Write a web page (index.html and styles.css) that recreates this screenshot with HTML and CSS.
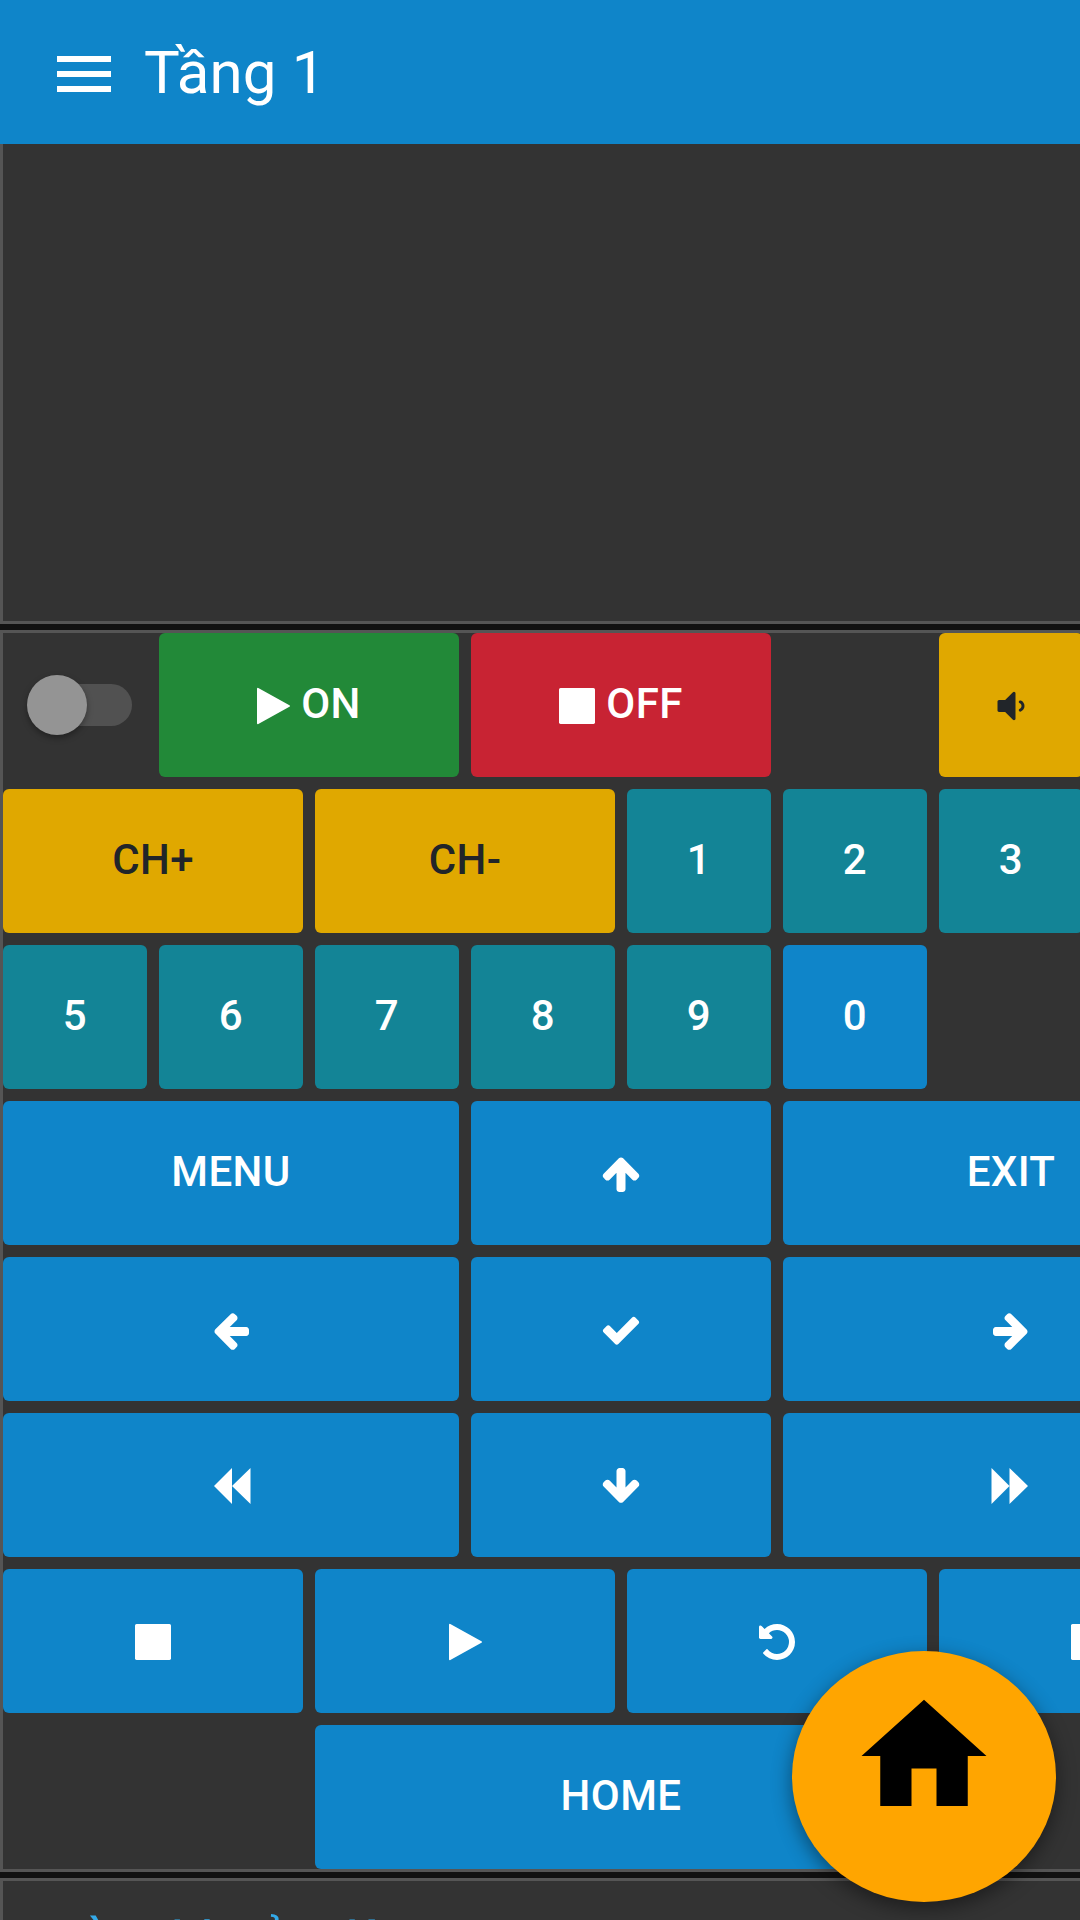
FILE: index.html
```
<!DOCTYPE html>
<html lang="vi">
<head>
<meta charset="utf-8">
<title>Tầng 1</title>
<link rel="stylesheet" href="styles.css">
</head>
<body>
<svg class="sprite" aria-hidden="true">
  <symbol id="play" viewBox="192 0 1408 1792"><path d="M1576 927l-1328 738q-23 13-39.500 3t-16.500-36v-1472q0-26 16.500-36t39.500 3l1328 738q23 13 23 31t-23 31z"/></symbol>
  <symbol id="stop" viewBox="128 0 1536 1792"><path d="M1664 192v1408q0 26-19 45t-45 19h-1408q-26 0-45-19t-19-45v-1408q0-26 19-45t45-19h1408q26 0 45 19t19 45z"/></symbol>
  <symbol id="pause" viewBox="128 0 1536 1792"><path d="M1664 192v1408q0 26-19 45t-45 19h-512q-26 0-45-19t-19-45v-1408q0-26 19-45t45-19h512q26 0 45 19t19 45zM768 192v1408q0 26-19 45t-45 19h-512q-26 0-45-19t-19-45v-1408q0-26 19-45t45-19h512q26 0 45 19t19 45z"/></symbol>
  <symbol id="volume" viewBox="0 0 1792 1792"><path d="M1088 352v1088q0 26-19 45t-45 19-45-19l-333-333h-262q-26 0-45-19t-19-45v-384q0-26 19-45t45-19h262l333-333q19-19 45-19t45 19 19 45zm384 544q0 76-42.500 141.500t-112.500 93.500q-10 5-25 5-26 0-45-18.500t-19-45.500q0-21 12-35.500t29-25 34-23 29-36 12-56.500-12-56.500-29-36-34-23-29-25-12-35.500q0-27 19-45.500t45-18.500q15 0 25 5 70 27 112.500 93t42.500 142z"/></symbol>
  <symbol id="up" viewBox="0 0 1792 1792"><path d="M1675 971q0 51-37 90l-75 75q-38 38-91 38-54 0-90-38l-294-293v704q0 52-37.500 84.500t-90.500 32.500h-128q-53 0-90.500-32.500t-37.500-84.500v-704l-294 293q-36 38-90 38t-90-38l-75-75q-38-38-38-90 0-53 38-91l651-651q35-37 90-37 54 0 91 37l651 651q37 39 37 91z"/></symbol>
  <symbol id="down" viewBox="0 0 1792 1792"><path d="M1675 832q0 53-37 90l-651 652q-39 37-91 37-53 0-90-37l-651-652q-38-36-38-90 0-53 38-91l74-75q39-37 91-37 53 0 90 37l294 294v-704q0-52 38-90t90-38h128q52 0 90 38t38 90v704l294-294q37-37 90-37 52 0 91 37l75 75q37 39 37 91z"/></symbol>
  <symbol id="left" viewBox="0 0 1792 1792"><path d="M1664 896v128q0 53-32.500 90.500t-84.500 37.500h-704l293 294q38 36 38 90t-38 90l-75 76q-37 37-90 37-52 0-91-37l-651-652q-37-37-37-90 0-52 37-91l651-650q38-38 91-38 52 0 90 38l75 74q38 38 38 91t-38 91l-293 293h704q52 0 84.500 37.500t32.500 90.500z"/></symbol>
  <symbol id="right" viewBox="0 0 1792 1792"><path d="M1600 960q0 54-37 91l-651 651q-39 37-91 37-51 0-90-37l-75-75q-38-38-38-91t38-91l293-293h-704q-52 0-84.500-37.500t-32.500-90.500v-128q0-53 32.500-90.500t84.500-37.500h704l-293-294q-38-36-38-90t38-90l75-75q38-38 90-38 53 0 91 38l651 651q37 35 37 90z"/></symbol>
  <symbol id="check" viewBox="0 0 1792 1792"><path d="M1671 566q0 40-28 68l-724 724-136 136q-28 28-68 28t-68-28l-136-136-362-362q-28-28-28-68t28-68l136-136q28-28 68-28t68 28l294 295 656-657q28-28 68-28t68 28l136 136q28 28 28 68z"/></symbol>
  <symbol id="undo" viewBox="0 0 1792 1792"><path d="M1664 896q0 156-61 298t-164 245-245 164-298 61q-172 0-327-72.500t-264-204.500q-7-10-6.500-22.500t8.500-20.500l137-138q10-9 25-9 16 2 23 12 73 95 179 147t225 52q104 0 198.500-40.500t163.500-109.500 109.500-163.500 40.500-198.500-40.500-198.500-109.500-163.500-163.500-109.500-198.500-40.500q-98 0-188 35.500t-160 101.500l137 138q31 30 14 69-17 40-59 40h-448q-26 0-45-19t-19-45v-448q0-42 40-59 39-17 69 14l130 129q107-101 244.500-156.500t284.500-55.500q156 0 298 61t245 164 164 245 61 298z"/></symbol>
  <symbol id="rewind" viewBox="0 0 42 42"><path d="M4 21 22 3v18L40.500 3v36L22 21v18z"/></symbol>
  <symbol id="forward" viewBox="0 0 42 42"><path d="M38 21 19.500 3v18L1.500 3v36l18-18v18z"/></symbol>
</svg>

<header class="topbar">
  <svg class="menu" viewBox="0 0 54 36"><path d="M0 0h54v6H0zM0 15h54v6H0zM0 30h54v6H0z"/></svg>
  <h1 class="title">Tầng 1</h1>
</header>

<main class="panels">
  <section class="panel panel-empty"></section>
  <section class="panel remote">
    <div class="cell"><span class="toggle"><span class="knob"></span></span></div>
    <button class="btn w2 green"><svg class="icon icon-play"><use href="#play"/></svg><span class="label">ON</span></button>
    <button class="btn w2 red"><svg class="icon icon-stop"><use href="#stop"/></svg><span class="label">OFF</span></button>
    <div class="cell"></div>
    <button class="btn w2 amber narrow"><svg class="icon"><use href="#volume"/></svg></button>

    <button class="btn w2 amber"><span class="label">CH+</span></button>
    <button class="btn w2 amber"><span class="label">CH-</span></button>
    <button class="btn teal"><span class="label">1</span></button>
    <button class="btn teal"><span class="label">2</span></button>
    <button class="btn teal"><span class="label">3</span></button>
    <div class="cell"></div>

    <button class="btn teal"><span class="label">5</span></button>
    <button class="btn teal"><span class="label">6</span></button>
    <button class="btn teal"><span class="label">7</span></button>
    <button class="btn teal"><span class="label">8</span></button>
    <button class="btn teal"><span class="label">9</span></button>
    <button class="btn"><span class="label">0</span></button>
    <div class="cell w2"></div>

    <button class="btn w3"><span class="label">MENU</span></button>
    <button class="btn w2"><svg class="icon"><use href="#up"/></svg></button>
    <button class="btn w3"><span class="label">EXIT</span></button>

    <button class="btn w3"><svg class="icon"><use href="#left"/></svg></button>
    <button class="btn w2"><svg class="icon"><use href="#check"/></svg></button>
    <button class="btn w3"><svg class="icon"><use href="#right"/></svg></button>

    <button class="btn w3"><svg class="icon"><use href="#rewind"/></svg></button>
    <button class="btn w2"><svg class="icon"><use href="#down"/></svg></button>
    <button class="btn w3"><svg class="icon"><use href="#forward"/></svg></button>

    <button class="btn w2"><svg class="icon icon-stop"><use href="#stop"/></svg></button>
    <button class="btn w2"><svg class="icon icon-play"><use href="#play"/></svg></button>
    <button class="btn w2"><svg class="icon"><use href="#undo"/></svg></button>
    <button class="btn w2"><svg class="icon icon-stop"><use href="#pause"/></svg></button>

    <div class="cell w2"></div>
    <button class="btn w4"><span class="label">HOME</span></button>
    <div class="cell w2"></div>
  </section>
  <section class="panel next"><h2 class="heading">Điều khiển đèn</h2></section>
</main>

<button class="fab"><svg class="home" viewBox="0 0 24 24"><path d="M10 20v-6h4v6h5v-8h3L12 3 2 12h3v8z"/></svg></button>
</body>
</html>
```
FILE: styles.css
```
* { box-sizing: border-box; }
body {
  margin: 0;
  width: 1080px;
  height: 1920px;
  overflow: hidden;
  display: flex;
  flex-direction: column;
  background: #111;
  font-family: Roboto, "Liberation Sans", sans-serif;
}
.sprite { display: none; }
.topbar {
  flex: none;
  height: 144px;
  padding: 0 57px;
  display: flex;
  align-items: center;
  gap: 33px;
  background: #0f85c9;
  color: #fff;
}
.menu { width: 54px; height: 36px; margin-top: 4px; fill: #fff; }
.title { margin: 2px 0 0; font-size: 60px; line-height: 72px; font-weight: 400; letter-spacing: 0.2px; }
.panels {
  flex: 1;
  min-height: 0;
  display: flex;
  flex-direction: column;
  align-items: flex-start;
  gap: 6px;
  overflow: hidden;
}
.panel {
  flex: none;
  width: 1242px;
  border: 3px solid #555;
  background: #333;
}
.panel-empty { height: 480px; border-top: 0; }
.remote {
  display: grid;
  grid-template-columns: repeat(8, 144px);
  grid-auto-rows: 144px;
  gap: 12px;
}
.cell { display: flex; align-items: center; justify-content: center; }
.w2 { grid-column: span 2; }
.w3 { grid-column: span 3; }
.w4 { grid-column: span 4; }
.narrow { grid-column: span 1; }
.btn {
  display: flex;
  align-items: center;
  justify-content: center;
  gap: 11px;
  padding: 0;
  border: 0;
  border-radius: 6px;
  background: #0f85c9;
  color: #fff;
  font: 500 42px/60px Roboto, "Liberation Sans", sans-serif;
  letter-spacing: 0.4px;
}
.label { margin-bottom: 2px; }
.green { background: #228938; }
.red { background: #c82333; }
.amber { background: #e0a800; color: #212529; }
.teal { background: #138496; }
.icon { width: 42px; height: 42px; margin-top: 2px; fill: currentColor; }
.icon-play { width: 33px; }
.icon-stop { width: 36px; }
.toggle {
  width: 105px;
  height: 42px;
  margin-left: 9px;
  border-radius: 21px;
  display: flex;
  align-items: center;
  background: linear-gradient(90deg, transparent 30px, #515151 30px);
}
.knob {
  width: 60px;
  height: 60px;
  border-radius: 50%;
  background: #949494;
  box-shadow: 0 3px 6px rgba(0, 0, 0, 0.35);
}
.next { height: 160px; border-bottom: 0; }
.heading {
  margin: 27px 0 0 35px;
  font-size: 59px;
  line-height: 72px;
  font-weight: 400;
  color: #33a9e8;
}
.fab {
  position: absolute;
  left: 792px;
  top: 1651px;
  width: 264px;
  height: 251px;
  padding: 30px 1px 0 0;
  border: 0;
  border-radius: 50%;
  display: flex;
  justify-content: center;
  align-items: flex-start;
  background: #ffa500;
  box-shadow: 0 6px 20px rgba(0, 0, 0, 0.45);
}
.home { width: 150px; height: 150px; fill: #000; }
```
